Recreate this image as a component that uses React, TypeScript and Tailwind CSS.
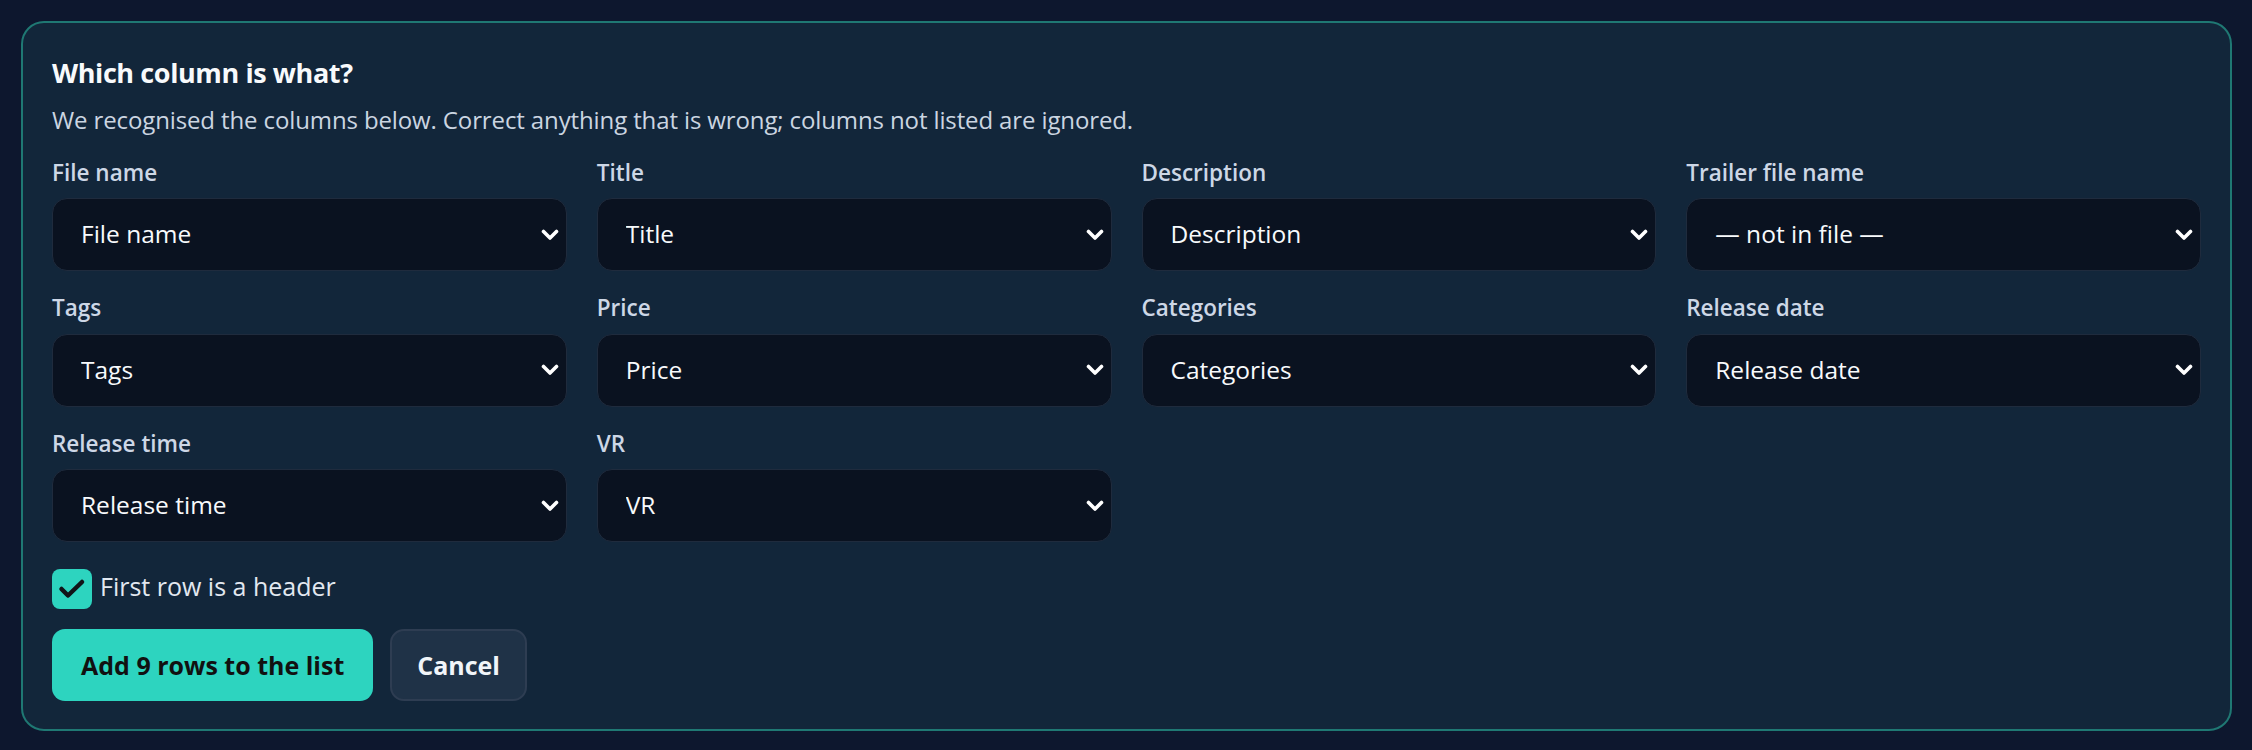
import { useState } from "react"

const FIELDS = [
  "File name",
  "Title",
  "Description",
  "Trailer file name",
  "Tags",
  "Price",
  "Categories",
  "Release date",
  "Release time",
  "VR",
]

const NOT_IN_FILE = "— not in file —"

// what the import guessed for each field
const initialMapping: Record<string, string> = {
  "File name": "File name",
  Title: "Title",
  Description: "Description",
  "Trailer file name": NOT_IN_FILE,
  Tags: "Tags",
  Price: "Price",
  Categories: "Categories",
  "Release date": "Release date",
  "Release time": "Release time",
  VR: "VR",
}

function Chevron() {
  return (
    <svg
      className="pointer-events-none absolute right-[8px] top-1/2 -translate-y-1/2"
      width="18"
      height="12"
      viewBox="0 0 18 12"
      fill="none"
    >
      <path d="M2.5 2.5L9 9L15.5 2.5" stroke="#ffffff" strokeWidth="3.6" strokeLinecap="round" strokeLinejoin="round" />
    </svg>
  )
}

function ColumnSelect({ field, value, onChange }: { field: string; value: string; onChange: (v: string) => void }) {
  return (
    <div className="flex flex-col">
      <label className="mb-[10.5px] text-[22.5px] leading-[30px] font-semibold text-[#cdd7e6]">{field}</label>
      <div className="relative">
        <select
          value={value}
          onChange={(e) => onChange(e.target.value)}
          className="h-[73px] w-full appearance-none rounded-[15px] border-[1.5px] border-[#1f2b3d] bg-[#0a1220] pl-[28px] pr-[40px] text-[24.5px] text-[#f8fafc] outline-none"
        >
          <option value={NOT_IN_FILE}>{NOT_IN_FILE}</option>
          {FIELDS.map((f) => (
            <option key={f} value={f}>
              {f}
            </option>
          ))}
        </select>
        <Chevron />
      </div>
    </div>
  )
}

export default function App() {
  const [mapping, setMapping] = useState(initialMapping)
  const [hasHeader, setHasHeader] = useState(true)

  return (
    <div className="min-h-screen bg-[#0d172e] pl-[21px] pr-[20px] pt-[21px] pb-[19px] font-['Open_Sans','Noto_Sans',sans-serif]">
      <div className="rounded-[23px] border-2 border-[#1f7873] bg-[#12263a] px-[29px] pt-[31.5px] pb-[28px]">
        <h2 className="text-[27px] leading-[36px] font-bold tracking-[-0.4px] text-[#f8fafc]">Which column is what?</h2>
        <p className="mt-[13px] text-[24px] leading-[32px] tracking-[-0.12px] text-[#cbd5e1]">
          We recognised the columns below. Correct anything that is wrong; columns not listed are ignored.
        </p>

        <div className="mt-[22px] grid grid-cols-4 gap-x-[30px] gap-y-[22px]">
          {FIELDS.map((f) => (
            <ColumnSelect
              key={f}
              field={f}
              value={mapping[f]}
              onChange={(v) => setMapping({ ...mapping, [f]: v })}
            />
          ))}
        </div>

        {/* header toggle */}
        <label className="mt-[27px] flex h-[40px] cursor-pointer items-start gap-[8px]">
          <span
            onClick={() => setHasHeader(!hasHeader)}
            className={
              hasHeader
                ? "flex h-[40px] w-[40px] items-center justify-center rounded-[8px] bg-[#2dd4bf]"
                : "flex h-[40px] w-[40px] items-center justify-center rounded-[8px] border-[1.5px] border-[#2e3f55] bg-[#0a1220]"
            }
          >
            {hasHeader && (
              <svg width="40" height="40" viewBox="0 0 40 40" fill="none">
                <path d="M9.5 20L16 26.5L30 13" stroke="#111418" strokeWidth="4.5" strokeLinecap="round" strokeLinejoin="round" />
              </svg>
            )}
          </span>
          <span className="text-[25px] leading-[34px] text-[#e2e8f0]">First row is a header</span>
        </label>

        <div className="mt-[20px] flex gap-[17px]">
          <button className="h-[72px] rounded-[13px] bg-[#2dd4bf] px-[29px] text-[25px] leading-[34px] font-bold text-[#111111]">
            Add 9 rows to the list
          </button>
          <button className="h-[72px] rounded-[14px] border-2 border-[#2e3d52] bg-[#1f3247] px-[25px] text-[25px] leading-[34px] font-bold text-[#f1f5f9]">
            Cancel
          </button>
        </div>
      </div>
    </div>
  )
}
